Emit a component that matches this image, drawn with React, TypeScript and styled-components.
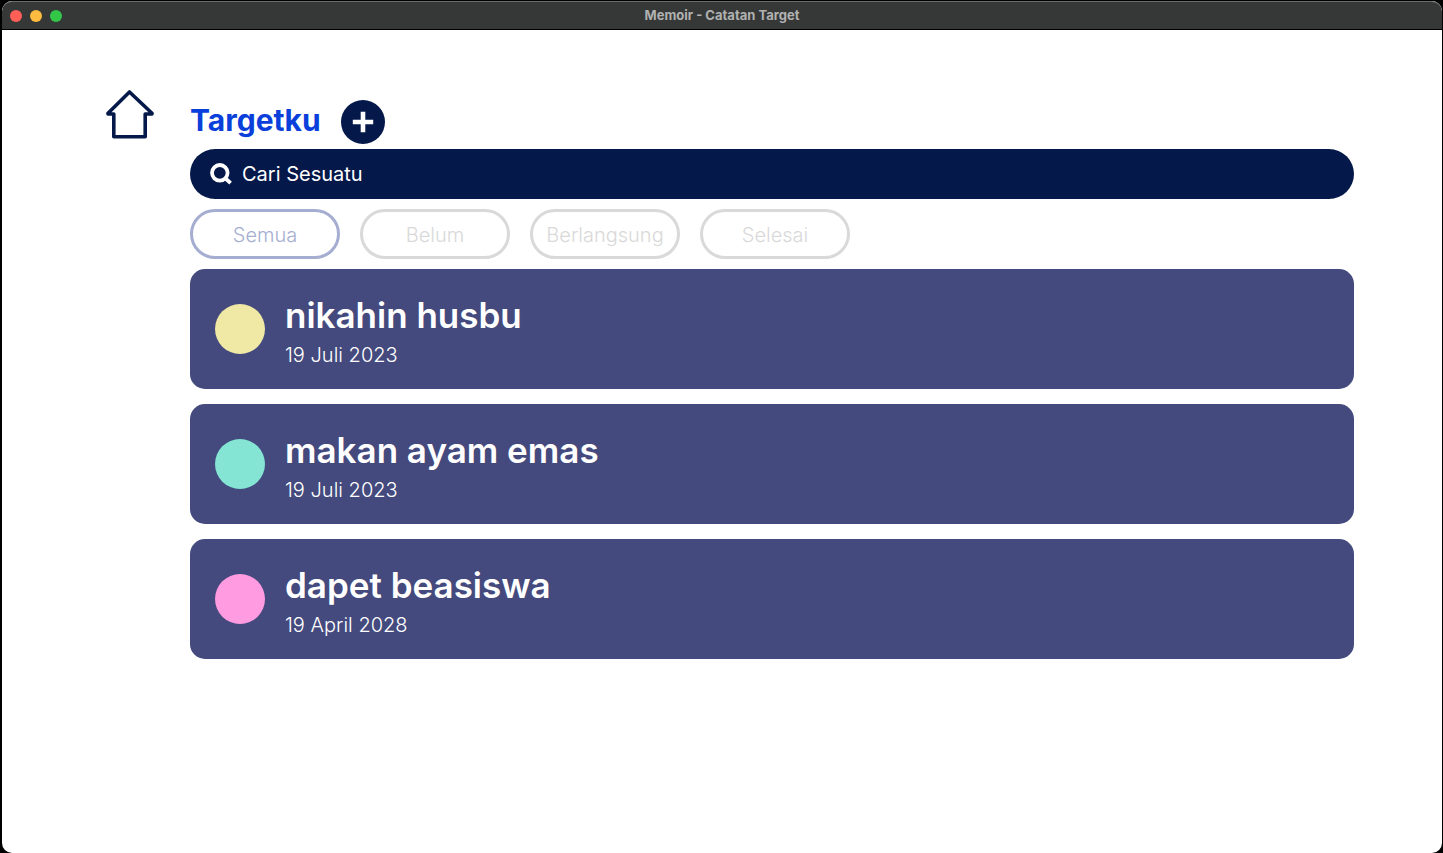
import React, { useState } from "react";
import styled, { createGlobalStyle } from "styled-components";

const GlobalStyle = createGlobalStyle`
  *, *::before, *::after { box-sizing: border-box; }
  body {
    margin: 0;
    background: #000;
    font-family: Inter, "Liberation Sans", sans-serif;
  }
  button, input { font: inherit; }
`;

const Desktop = styled.div`
  min-height: 100vh;
  padding: 1px 1px 0 2px;
  display: flex;
  background: #000;
`;

const Window = styled.div`
  flex: 1;
  display: flex;
  flex-direction: column;
  border-radius: 10px;
  overflow: hidden;
  background: #fff;
`;

const TitleBar = styled.header`
  height: 29px;
  display: grid;
  grid-template-columns: 1fr auto 1fr;
  align-items: center;
  padding: 0 8px;
  background: #363837;
  border-top: 1px solid #6b6c6c;
  border-bottom: 1px solid #000;
  border-radius: 10px 10px 0 0;
`;

const Lights = styled.div`
  display: flex;
  gap: 8px;
`;

const Light = styled.span<{ $color: string }>`
  width: 12px;
  height: 12px;
  border-radius: 50%;
  background: ${(p) => p.$color};
`;

const WindowTitle = styled.span`
  padding-bottom: 2px;
  font-size: 13px;
  line-height: 16px;
  font-weight: 700;
  color: #b0b1b1;
`;

const Page = styled.div`
  display: flex;
  align-items: flex-start;
  gap: 36px;
  padding: 60px 88px 60px 104px;
`;

const HomeLink = styled.a`
  flex: none;
  display: block;
  height: 50px;
  color: #05184a;
`;

const Main = styled.main`
  flex: 1;
  min-width: 0;
  display: flex;
  flex-direction: column;
  gap: 5px;
`;

const Heading = styled.div`
  display: flex;
  align-items: flex-start;
  gap: 20px;
  padding-top: 10px;
`;

const Title = styled.h1`
  margin: 0;
  font-size: 30px;
  line-height: 40px;
  font-weight: 700;
  color: #0b3fdb;
`;

const AddButton = styled.button`
  width: 44px;
  height: 44px;
  padding: 0;
  border: 0;
  border-radius: 50%;
  background: #05184a;
  color: #fff;
  display: grid;
  place-items: center;
  cursor: pointer;
`;

const Content = styled.div`
  display: flex;
  flex-direction: column;
  gap: 10px;
`;

const SearchBar = styled.label`
  height: 50px;
  padding: 0 20px;
  display: flex;
  align-items: center;
  gap: 10px;
  border-radius: 25px;
  background: #05184a;
  color: #fff;
`;

const SearchInput = styled.input`
  flex: 1;
  min-width: 0;
  padding: 0;
  border: 0;
  outline: 0;
  background: transparent;
  color: #fff;
  font-size: 20px;
  line-height: 24px;
  &::placeholder { color: #fff; opacity: 1; }
`;

const Filters = styled.div`
  display: flex;
  flex-wrap: wrap;
  gap: 20px;
`;

const FilterButton = styled.button<{ $active: boolean }>`
  width: 150px;
  height: 50px;
  padding: 2px 0 0;
  border: 3px solid ${(p) => (p.$active ? "#a5aed0" : "#d9d9d9")};
  border-radius: 25px;
  background: #fff;
  color: ${(p) => (p.$active ? "#a5aed0" : "#d9d9d9")};
  font-size: 20px;
  line-height: 24px;
  font-weight: 300;
  cursor: pointer;
`;

const TargetList = styled.ul`
  list-style: none;
  margin: 0;
  padding: 0;
  display: flex;
  flex-direction: column;
  gap: 15px;
`;

const TargetCard = styled.li`
  min-height: 120px;
  padding: 20px 25px;
  display: flex;
  align-items: center;
  gap: 20px;
  border-radius: 15px;
  background: #444a7d;
  color: #fff;
`;

const Dot = styled.span<{ $color: string }>`
  flex: none;
  width: 50px;
  height: 50px;
  border-radius: 50%;
  background: ${(p) => p.$color};
`;

const TargetName = styled.h2`
  margin: 0;
  font-size: 35px;
  line-height: 48px;
  font-weight: 600;
`;

const TargetDate = styled.p`
  margin: 4px 0 0;
  font-size: 20px;
  line-height: 24px;
  font-weight: 300;
`;

const filters = ["Semua", "Belum", "Berlangsung", "Selesai"];

const targets = [
  { name: "nikahin husbu", date: "19 Juli 2023", color: "#f0e8a5" },
  { name: "makan ayam emas", date: "19 Juli 2023", color: "#84e5d4" },
  { name: "dapet beasiswa", date: "19 April 2028", color: "#ff9be0" },
];

export default function App() {
  const [active, setActive] = useState("Semua");
  const [query, setQuery] = useState("");

  return (
    <>
      <GlobalStyle />
      <Desktop>
        <Window>
          <TitleBar>
            <Lights>
              <Light $color="#ff5f57" />
              <Light $color="#febb40" />
              <Light $color="#33c748" />
            </Lights>
            <WindowTitle>Memoir - Catatan Target</WindowTitle>
          </TitleBar>
          <Page>
            <HomeLink href="#" aria-label="Beranda">
              <svg width="48" height="50" viewBox="0 0 48 50" fill="none" stroke="currentColor" strokeWidth="3.6" strokeLinejoin="round" strokeLinecap="round">
                <path d="M23.5 2 L2 23.2 V24 H7.8 V46.7 H39.2 V24 H46 V23.2 Z" />
              </svg>
            </HomeLink>
            <Main>
              <Heading>
                <Title>Targetku</Title>
                <AddButton type="button" aria-label="Tambah target">
                  <svg width="22" height="22" viewBox="0 0 22 22" fill="none" stroke="currentColor" strokeWidth="4.6">
                    <path d="M11 0.8V21.2M0.8 11H21.2" />
                  </svg>
                </AddButton>
              </Heading>
              <Content>
                <SearchBar>
                  <svg width="22" height="22" viewBox="0 0 22 22" fill="none" stroke="currentColor" strokeWidth="3.8" aria-hidden="true">
                    <circle cx="9.8" cy="9.8" r="7.8" />
                    <path d="M14.5 14.5 L20.6 20.2" />
                  </svg>
                  <SearchInput
                    type="text"
                    aria-label="Cari Sesuatu"
                    placeholder="Cari Sesuatu"
                    value={query}
                    onChange={(e) => setQuery(e.target.value)}
                  />
                </SearchBar>
                <Filters>
                  {filters.map((f) => (
                    <FilterButton key={f} type="button" $active={f === active} onClick={() => setActive(f)}>
                      {f}
                    </FilterButton>
                  ))}
                </Filters>
                <TargetList>
                  {targets.map((t) => (
                    <TargetCard key={t.name}>
                      <Dot $color={t.color} />
                      <div>
                        <TargetName>{t.name}</TargetName>
                        <TargetDate>{t.date}</TargetDate>
                      </div>
                    </TargetCard>
                  ))}
                </TargetList>
              </Content>
            </Main>
          </Page>
        </Window>
      </Desktop>
    </>
  );
}
